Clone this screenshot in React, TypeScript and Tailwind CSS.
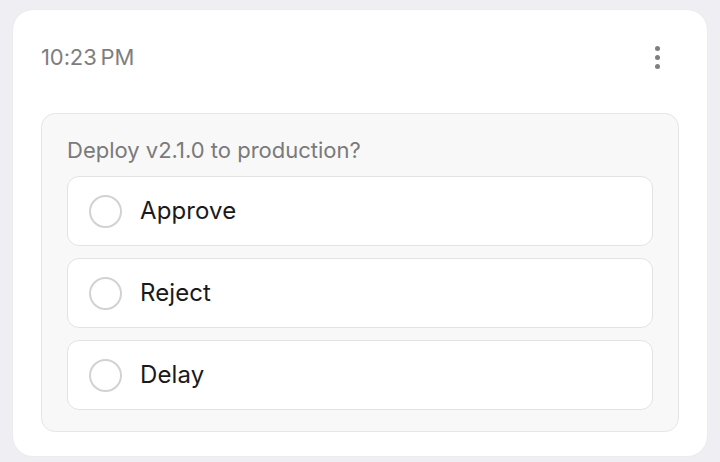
export default function App() {
  const options = ['Approve', 'Reject', 'Delay']

  return (
    <div className="min-h-[462px] w-[720px] bg-[#efeff3] pt-[10px] pb-[5px] font-['Inter','Noto_Sans',sans-serif]">
      <div className="mx-[13px] rounded-[20px] bg-white px-[28px] pt-[33px] pb-[24px] shadow-[0_0_2px_rgba(0,0,0,0.06)]">
        {/* Header */}
        <div className="flex h-[28px] items-center justify-between">
          <span className="text-[22px] leading-[28px] tracking-[-0.1px] text-[#7e7e7e]">10:23&#8201;PM</span>
          <button type="button" className="mr-[19px] flex flex-col items-center gap-[4px]">
            <span className="h-[5px] w-[5px] rounded-full bg-[#7f7f7f]" />
            <span className="h-[5px] w-[5px] rounded-full bg-[#7f7f7f]" />
            <span className="h-[5px] w-[5px] rounded-full bg-[#7f7f7f]" />
          </button>
        </div>

        {/* Poll */}
        <div className="mt-[42px] rounded-[14px] border border-[#e6e6e6] bg-[#f8f8f8] px-[25px] pt-[22px] pb-[21px]">
          <p className="text-[22px] leading-[28px] tracking-[0px] text-[#7a7a7a]">Deploy v2.1.0 to production?</p>
          <div className="mt-[12px] flex flex-col gap-[12px]">
            {options.map((option) => (
              <div
                key={option}
                className="flex h-[70px] items-center gap-[18px] rounded-[12px] border border-[#e3e3e3] bg-white pl-[21px]"
              >
                <span className="h-[33px] w-[33px] rounded-full border-[2.5px] border-[#d2d2d2]" />
                <span className="text-[24px] leading-[32px] tracking-[0.1px] text-[#1a1a1a]">{option}</span>
              </div>
            ))}
          </div>
        </div>
      </div>
    </div>
  )
}
